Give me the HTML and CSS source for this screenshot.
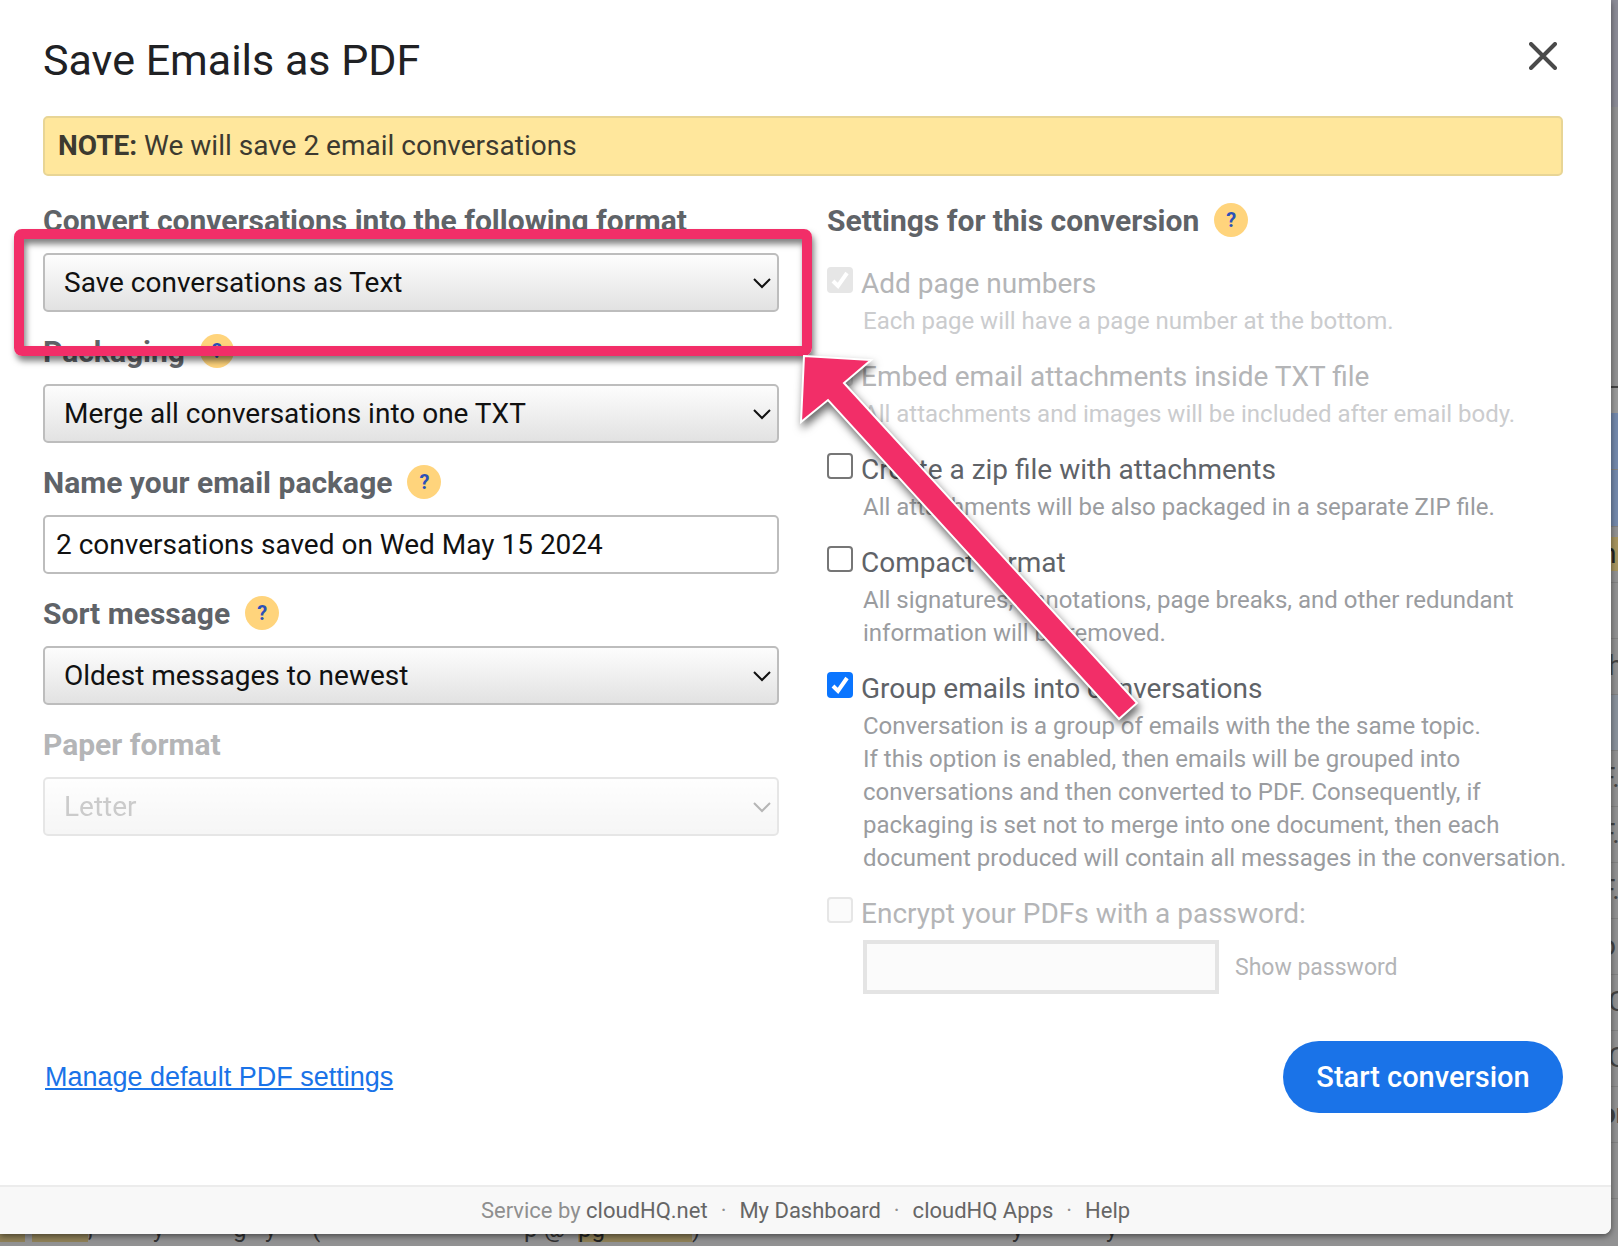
FILE: index.html
```html
<!DOCTYPE html>
<html lang="en">
<head>
<meta charset="utf-8">
<meta name="viewport" content="width=device-width, initial-scale=1.0">
<title>Save Emails as PDF</title>
<link rel="stylesheet" href="styles.css">
</head>
<body>
<div class="page">
  <div class="modal" role="dialog" aria-labelledby="title">
    <form class="modal-body">
      <header class="modal-header">
        <h1 id="title">Save Emails as PDF</h1>
        <button type="button" class="close" aria-label="Close">
          <svg width="28" height="28" viewBox="0 0 28 28"><path d="M2 2L26 26M26 2L2 26" stroke="#4a4a4a" stroke-width="4" stroke-linecap="round" fill="none"/></svg>
        </button>
      </header>

      <p class="note"><strong>NOTE:</strong> We will save 2 email conversations</p>

      <div class="columns">
        <!-- left column -->
        <div class="fields">
          <div class="field">
            <label for="format">Convert conversations into the following format</label>
            <select id="format"><option>Save conversations as Text</option></select>
          </div>
          <div class="field">
            <div class="field-label"><label for="packaging">Packaging</label><button type="button" class="help">?</button></div>
            <select id="packaging"><option>Merge all conversations into one TXT</option></select>
          </div>
          <div class="field">
            <div class="field-label"><label for="name">Name your email package</label><button type="button" class="help">?</button></div>
            <input type="text" id="name" value="2 conversations saved on Wed May 15 2024">
          </div>
          <div class="field">
            <div class="field-label"><label for="sort">Sort message</label><button type="button" class="help">?</button></div>
            <select id="sort"><option>Oldest messages to newest</option></select>
          </div>
          <div class="field disabled">
            <label for="paper">Paper format</label>
            <select id="paper" disabled><option>Letter</option></select>
          </div>
        </div>

        <!-- right column -->
        <div class="settings">
          <h2>Settings for this conversion <button type="button" class="help">?</button></h2>
          <div class="option disabled">
            <input type="checkbox" id="numbers" checked disabled>
            <label for="numbers">Add page numbers</label>
            <p>Each page will have a page number at the bottom.</p>
          </div>
          <div class="option disabled">
            <input type="checkbox" id="embed" disabled>
            <label for="embed">Embed email attachments inside TXT file</label>
            <p>All attachments and images will be included after email body.</p>
          </div>
          <div class="option">
            <input type="checkbox" id="zip">
            <label for="zip">Create a zip file with attachments</label>
            <p>All attachments will be also packaged in a separate ZIP file.</p>
          </div>
          <div class="option">
            <input type="checkbox" id="compact">
            <label for="compact">Compact format</label>
            <p>All signatures, annotations, page breaks, and other redundant<br>information will be removed.</p>
          </div>
          <div class="option">
            <input type="checkbox" id="group" checked>
            <label for="group">Group emails into conversations</label>
            <p>Conversation is a group of emails with the the same topic.<br>If this option is enabled, then emails will be grouped into<br>conversations and then converted to PDF. Consequently, if<br>packaging is set not to merge into one document, then each<br>document produced will contain all messages in the conversation.</p>
          </div>
          <div class="option disabled">
            <input type="checkbox" id="encrypt" disabled>
            <label for="encrypt">Encrypt your PDFs with a password:</label>
            <div class="password">
              <input type="password" aria-label="Password" disabled>
              <button type="button" disabled>Show password</button>
            </div>
          </div>
        </div>
      </div>

      <div class="actions">
        <a href="#">Manage default PDF settings</a>
        <button type="submit" class="start">Start conversion</button>
      </div>
    </form>

    <footer class="modal-footer">
      <span>Service by <a href="#">cloudHQ.net</a></span>
      <span>·</span>
      <a href="#">My Dashboard</a>
      <span>·</span>
      <a href="#">cloudHQ Apps</a>
      <span>·</span>
      <a href="#">Help</a>
    </footer>
  </div>

  <!-- dimmed inbox behind the dialog -->
  <div class="inbox" aria-hidden="true">
    <div class="toolbar"></div>
    <div class="tabs"></div>
    <div class="gap"></div>
    <div class="row blue"></div>
    <div class="row blue"></div>
    <div class="row mark"><span>n</span></div>
    <div class="row"></div>
    <div class="row"><span>h</span></div>
    <div class="row light"></div>
    <div class="row cut"><span>F.</span></div>
    <div class="row cut"><span>F.</span></div>
    <div class="row cut"><span>F.</span></div>
    <div class="row cut"><span>o</span></div>
    <div class="row"><span>C</span></div>
    <div class="row"><span>C</span></div>
    <div class="row cut"><span><b>or</b></span></div>
    <div class="row"></div>
    <div class="row"></div>
  </div>
  <div class="snippet" aria-hidden="true">
    <mark></mark><mark></mark><i>,</i><i>y</i><i>g</i><i>y</i><i>(</i><i>p</i><i>@</i><mark>pg</mark><i>)</i><i>y</i><i>y</i>
  </div>

  <!-- callout over the format drop-down -->
  <div class="callout"></div>
  <svg class="arrow" width="360" height="390" viewBox="0 0 360 390">
    <path d="M14 15L81 19L54 42L347 362L329 378L38 59L11 81Z" fill="#f22e68" stroke="#fff" stroke-width="2"/>
  </svg>
</div>
</body>
</html>
```
FILE: styles.css
```css
* {
  box-sizing: border-box;
}

body {
  margin: 0;
  background: #929293;
  color: #5f6368;
  font-family: Roboto, "Liberation Sans", sans-serif;
  font-size: 28px;
}

.page {
  position: relative;
  padding: 0 7px 11px 0;
  overflow: hidden;
}

.modal {
  position: relative;
  z-index: 1;
  background: #fff;
  border-radius: 0 0 8px 0;
  box-shadow: 0 2px 6px rgba(0, 0, 0, .5);
  overflow: hidden;
}

.modal-body {
  padding: 28px 48px 72px 43px;
}

.modal-header {
  display: flex;
  justify-content: space-between;
  align-items: center;
  height: 64px;
}

h1 {
  margin: 0;
  color: #202124;
  font-size: 43px;
  font-weight: 400;
}

button {
  border: 0;
  padding: 0;
  background: none;
  font-family: inherit;
  cursor: pointer;
}

.close {
  padding: 0 6px 6px 0;
}

.note {
  margin: 24px 0 25px;
  padding: 0 13px;
  border: 2px solid #e8d595;
  border-radius: 5px;
  background: #ffe79c;
  color: #3c3a30;
  line-height: 56px;
}

.columns {
  display: grid;
  grid-template-columns: minmax(0, 1fr) minmax(0, 1fr);
  column-gap: 48px;
}

.field {
  display: flex;
  flex-direction: column;
  margin-bottom: 20px;
}

.field > label,
.field-label,
h2 {
  display: flex;
  align-items: center;
  gap: 15px;
  height: 38px;
  margin: 0 0 14px;
  font-size: 30px;
  font-weight: 700;
}

.help {
  width: 34px;
  height: 34px;
  border-radius: 50%;
  background: #ffd47c;
  color: #2b50b8;
  font-size: 20px;
  font-weight: 700;
}

.field select,
.field input {
  width: 100%;
  height: 59px;
  border: 2px solid #bdbdbd;
  border-radius: 5px;
  padding: 0 11px;
  background: #fff;
  color: #111;
  font-family: inherit;
  font-size: 28px;
}

.field select {
  appearance: none;
  padding-left: 19px;
  background: url("data:image/svg+xml,%3Csvg xmlns='http://www.w3.org/2000/svg' width='18' height='12'%3E%3Cpath d='M1 2l8 8 8-8' fill='none' stroke='%23111' stroke-width='2'/%3E%3C/svg%3E") no-repeat right 6px center, linear-gradient(#fdfdfd, #e2e2e2);
}

.field.disabled label {
  color: #b4b5b7;
}

.field.disabled select {
  border-color: #b0b0b0;
  color: #555;
  opacity: .3;
}

h2 {
  margin-bottom: 26px;
}

.option {
  display: grid;
  grid-template-columns: 26px 1fr;
  column-gap: 8px;
  margin-bottom: 20px;
}

.option > input {
  appearance: none;
  width: 26px;
  height: 26px;
  margin: 2px 0 0;
  border: 2px solid #767676;
  border-radius: 4px;
  background: #fff;
}

.option > input:checked {
  border: 0;
  background: #0a75ff url("data:image/svg+xml,%3Csvg xmlns='http://www.w3.org/2000/svg' width='26' height='26'%3E%3Cpath d='M6 14l5 5L20 6' fill='none' stroke='%23fff' stroke-width='4'/%3E%3C/svg%3E") no-repeat center;
}

.option > input:disabled {
  border-color: #e6e6e6;
  background-color: #fbfbfb;
}

.option > input:disabled:checked {
  background-color: #e6e6e6;
}

.option > label {
  line-height: 38px;
}

.option p {
  grid-column: 2;
  margin: 2px 0 0 2px;
  color: #9a9c9f;
  font-size: 24px;
  line-height: 33px;
  white-space: nowrap;
}

.option.disabled label {
  color: #b4b5b7;
}

.option.disabled p {
  color: #cbccce;
}

.password {
  grid-column: 2;
  display: flex;
  align-items: center;
  gap: 16px;
  margin: 7px 0 0 2px;
}

.password input {
  width: 356px;
  height: 54px;
  border: 4px solid #e4e4e4;
  background: #fbfbfb;
}

.password button {
  color: #b4b5b7;
  font-size: 23px;
}

.actions {
  display: flex;
  justify-content: space-between;
  align-items: center;
  margin-top: 27px;
}

.actions a {
  margin-left: 2px;
  color: #1a73e8;
  font-family: "Liberation Sans", sans-serif;
  font-size: 27px;
}

.start {
  width: 280px;
  height: 72px;
  border-radius: 36px;
  background: #1a73e8;
  color: #fff;
  font-size: 29px;
  font-weight: 500;
}

.modal-footer {
  display: flex;
  justify-content: center;
  align-items: center;
  gap: 13px;
  height: 49px;
  border-top: 2px solid #ececec;
  background: #f8f8f8;
  color: #8f8f8f;
  font-size: 22px;
}

.modal-footer a {
  color: #666;
  text-decoration: none;
}

/* dimmed inbox */
.inbox {
  position: absolute;
  top: 0;
  right: 0;
  bottom: 0;
  width: 7px;
  overflow: hidden;
  color: #444;
}

.toolbar {
  height: 107px;
  background: #8c8c97;
}

.tabs {
  height: 281px;
  border-bottom: 2px solid #444;
}

.gap {
  height: 25px;
  background: #9b9b9b;
}

.row {
  height: 56px;
  border-bottom: 1px solid #838383;
  font-size: 28px;
  line-height: 54px;
}

.row span {
  display: block;
  width: 20px;
  margin-left: -3px;
}

.row.cut span {
  width: 40px;
  margin-left: -11px;
}

.row.blue {
  height: 57px;
  background: #7489ac;
}

.row.light {
  background: #8a929d;
}

.row.mark {
  background: linear-gradient(#929293 10px, #a79560 10px, #a79560 44px, #929293 44px);
}

.row.mark span {
  margin-left: -10px;
  color: #222;
}

.snippet {
  position: absolute;
  left: 0;
  bottom: 0;
  display: grid;
  grid-template-columns: 25px 56px 72px 80px 32px 47px 212px 20px 34px 114px 320px 94px 20px;
  height: 28px;
  color: #333;
  font-size: 24px;
  line-height: 24px;
}

.snippet i,
.snippet mark {
  height: 25px;
  font-style: normal;
}

.snippet mark {
  background: #8f8158;
  color: #222;
}

.snippet mark:nth-child(2) {
  margin-right: -7px;
  margin-left: 7px;
}

.snippet i:nth-child(3) {
  padding-left: 7px;
}

.callout {
  position: absolute;
  z-index: 2;
  top: 229px;
  left: 14px;
  width: 798px;
  height: 127px;
  border: 10px solid #f22e68;
  border-radius: 8px;
  box-shadow: 2px 5px 6px rgba(0, 0, 0, .5), inset 2px 5px 6px rgba(0, 0, 0, .5);
  pointer-events: none;
}

.arrow {
  position: absolute;
  z-index: 2;
  top: 341px;
  left: 790px;
  filter: drop-shadow(2px 5px 4px rgba(0, 0, 0, .6));
  pointer-events: none;
}
```
